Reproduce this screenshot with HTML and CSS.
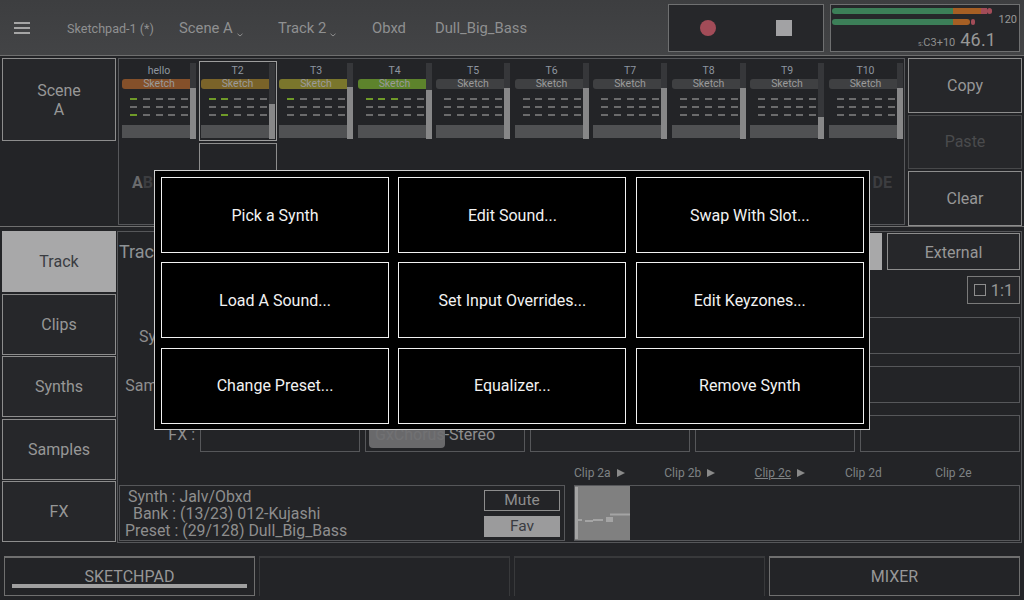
FILE: index.html
```html
<!DOCTYPE html>
<html lang="en">
<head>
<meta charset="utf-8">
<title>Sketchpad</title>
<link rel="stylesheet" href="styles.css">
</head>
<body>
<div class="app">
  <header class="header">
    <div class="burger"><i></i><i></i><i></i></div>
    <span class="h-item h-sketchpad">Sketchpad-1 (*)</span>
    <span class="h-item h-scene">Scene A<svg class="chev" width="6" height="4" viewBox="0 0 6 4"><path d="M.5 .8 3 3 5.5 .8" fill="none" stroke="#8f8f8f"/></svg></span>
    <span class="h-item h-track">Track 2<svg class="chev" width="6" height="4" viewBox="0 0 6 4"><path d="M.5 .8 3 3 5.5 .8" fill="none" stroke="#8f8f8f"/></svg></span>
    <span class="h-item h-synth">Obxd</span>
    <span class="h-item h-preset">Dull_Big_Bass</span>
    <div class="transport">
      <span class="rec"></span>
      <span class="stop"></span>
    </div>
    <div class="meter">
      <div class="m-bar m-1"><b class="g"></b><b class="o"></b><b class="r"></b><b class="dot"></b></div>
      <div class="m-bar m-2"><b class="g"></b><b class="o"></b><b class="dot"></b></div>
      <span class="bpm">120</span>
      <div class="m-info"><span class="note"><small>s:</small>C3+10</span><span class="vol">46.1</span></div>
    </div>
  </header>

  <section class="top">
    <div class="btn scene">Scene<br>A</div>
    <div class="tracks">
      <div class="track-row">
        <div class="cell"><div class="name">hello</div><div class="tag t-orange">Sketch</div>
          <div class="steps"><div><i class="on"></i><i></i><i></i><i></i><i></i></div><div><i></i><i></i><i></i><i></i><i></i></div><div><i class="on"></i><i></i><i></i><i></i><i></i></div></div>
          <div class="gbar"></div><div class="scroll"><div class="thumb" style="height:51px"></div></div></div>
        <div class="cell sel"><div class="name">T2</div><div class="tag t-gold">Sketch</div>
          <div class="steps"><div><i class="on"></i><i class="on"></i><i></i><i></i><i></i></div><div><i></i><i></i><i></i><i></i><i></i></div><div><i></i><i class="on"></i><i></i><i></i><i></i></div></div>
          <div class="gbar"></div><div class="scroll"><div class="thumb" style="height:35px"></div></div><div class="slot"></div></div>
        <div class="cell"><div class="name">T3</div><div class="tag t-olive">Sketch</div>
          <div class="steps"><div><i class="on"></i><i></i><i></i><i></i><i></i></div><div><i></i><i></i><i></i><i></i><i></i></div><div><i></i><i></i><i></i><i></i><i></i></div></div>
          <div class="gbar"></div><div class="scroll"><div class="thumb" style="height:52px"></div></div></div>
        <div class="cell"><div class="name">T4</div><div class="tag t-green">Sketch</div>
          <div class="steps"><div><i class="on"></i><i class="on"></i><i class="on"></i><i></i><i></i></div><div><i></i><i></i><i></i><i></i><i></i></div><div><i></i><i></i><i></i><i></i><i></i></div></div>
          <div class="gbar"></div><div class="scroll"><div class="thumb" style="height:49px"></div></div></div>
        <div class="cell"><div class="name">T5</div><div class="tag">Sketch</div>
          <div class="steps"><div><i></i><i></i><i></i><i></i><i></i></div><div><i></i><i></i><i></i><i></i><i></i></div><div><i></i><i></i><i></i><i></i><i></i></div></div>
          <div class="gbar"></div><div class="scroll"><div class="thumb" style="height:51px"></div></div></div>
        <div class="cell"><div class="name">T6</div><div class="tag">Sketch</div>
          <div class="steps"><div><i></i><i></i><i></i><i></i><i></i></div><div><i></i><i></i><i></i><i></i><i></i></div><div><i></i><i></i><i></i><i></i><i></i></div></div>
          <div class="gbar"></div><div class="scroll"><div class="thumb" style="height:51px"></div></div></div>
        <div class="cell"><div class="name">T7</div><div class="tag">Sketch</div>
          <div class="steps"><div><i></i><i></i><i></i><i></i><i></i></div><div><i></i><i></i><i></i><i></i><i></i></div><div><i></i><i></i><i></i><i></i><i></i></div></div>
          <div class="gbar"></div><div class="scroll"><div class="thumb" style="height:51px"></div></div></div>
        <div class="cell"><div class="name">T8</div><div class="tag">Sketch</div>
          <div class="steps"><div><i></i><i></i><i></i><i></i><i></i></div><div><i></i><i></i><i></i><i></i><i></i></div><div><i></i><i></i><i></i><i></i><i></i></div></div>
          <div class="gbar"></div><div class="scroll"><div class="thumb" style="height:51px"></div></div></div>
        <div class="cell"><div class="name">T9</div><div class="tag">Sketch</div>
          <div class="steps"><div><i></i><i></i><i></i><i></i><i></i></div><div><i></i><i></i><i></i><i></i><i></i></div><div><i></i><i></i><i></i><i></i><i></i></div></div>
          <div class="gbar"></div><div class="scroll"><div class="thumb" style="height:22px"></div></div></div>
        <div class="cell"><div class="name">T10</div><div class="tag">Sketch</div>
          <div class="steps"><div><i></i><i></i><i></i><i></i><i></i></div><div><i></i><i></i><i></i><i></i><i></i></div><div><i></i><i></i><i></i><i></i><i></i></div></div>
          <div class="gbar"></div><div class="scroll"><div class="thumb" style="height:51px"></div></div></div>
      </div>
      <div class="letters"><span class="l-a">A<em>B</em></span><span class="l-e">DE</span></div>
    </div>
    <div class="actions">
      <div class="btn act">Copy</div>
      <div class="btn act off">Paste</div>
      <div class="btn act">Clear</div>
    </div>
  </section>

  <section class="middle">
    <nav class="tabs">
      <div class="btn tab active">Track</div>
      <div class="btn tab">Clips</div>
      <div class="btn tab">Synths</div>
      <div class="btn tab">Samples</div>
      <div class="btn tab">FX</div>
    </nav>
    <div class="main">
      <div class="row-title">
        <span class="title">Track</span>
        <span class="seg"></span>
        <div class="btn external">External</div>
      </div>
      <div class="row-ratio"><div class="btn ratio"><span class="box"></span>1:1</div></div>
      <div class="row-slots"><span class="lbl">Synths :</span><div class="slotbox"></div><div class="slotbox"></div><div class="slotbox"></div><div class="slotbox"></div><div class="slotbox"></div></div>
      <div class="row-slots"><span class="lbl">Samples :</span><div class="slotbox"></div><div class="slotbox"></div><div class="slotbox"></div><div class="slotbox"></div><div class="slotbox"></div></div>
      <div class="row-slots"><span class="lbl">FX :</span><div class="slotbox"></div><div class="slotbox fx">GxChorus-Stereo<span class="fill"></span></div><div class="slotbox"></div><div class="slotbox"></div><div class="slotbox"></div></div>
      <div class="clip-labels">
        <span>Clip 2a<i class="play"></i></span>
        <span>Clip 2b<i class="play"></i></span>
        <span><u>Clip 2c</u><i class="play"></i></span>
        <span>Clip 2d</span>
        <span>Clip 2e</span>
      </div>
      <div class="row-bottom">
        <div class="info">
          <div class="info-text">
            <div><span class="k">Synth :</span> Jalv/Obxd</div>
            <div><span class="k">Bank :</span> (13/23) 012-Kujashi</div>
            <div><span class="k">Preset :</span> (29/128) Dull_Big_Bass</div>
          </div>
          <div class="info-btns">
            <div class="mini">Mute</div>
            <div class="mini fav">Fav</div>
          </div>
        </div>
        <div class="clip-view">
          <svg class="thumbnail" width="55" height="54" viewBox="0 0 55 54">
            <rect width="55" height="54" fill="#808080"/>
            <rect x="0" y="1" width="3" height="52" fill="#a4a4a4"/>
            <path d="M3 34h4M10 35h8M18 34h10M35 28.500h20" stroke="#a4a4a4" stroke-width="2" fill="none"/>
            <rect x="31" y="31" width="7" height="5" fill="#a4a4a4"/>
          </svg>
        </div>
      </div>
    </div>
  </section>

  <footer class="footer">
    <div class="fbtn on">SKETCHPAD<span class="under"></span></div>
    <div class="fbtn dim"></div>
    <div class="fbtn dim"></div>
    <div class="fbtn on">MIXER</div>
  </footer>

  <div class="popup">
    <button class="pbtn">Pick a Synth</button>
    <button class="pbtn">Edit Sound...</button>
    <button class="pbtn">Swap With Slot...</button>
    <button class="pbtn">Load A Sound...</button>
    <button class="pbtn">Set Input Overrides...</button>
    <button class="pbtn">Edit Keyzones...</button>
    <button class="pbtn">Change Preset...</button>
    <button class="pbtn">Equalizer...</button>
    <button class="pbtn">Remove Synth</button>
  </div>
</div>
</body>
</html>
```

FILE: styles.css
```css
* { box-sizing: border-box; }
html, body { margin: 0; padding: 0; }
body { background: #232427; font-family: Roboto, "Liberation Sans", sans-serif; color: #979797; }
.app { position: relative; width: 1024px; height: 600px; overflow: hidden; display: flex; flex-direction: column; background: #232427; }
.btn { border: 1px solid #8d8d8d; display: flex; align-items: center; justify-content: center; text-align: center; background: #26272a; }

/* header */
.header { position: relative; height: 56px; flex: none; display: flex; align-items: center; background: linear-gradient(#3d3e40, #434446); border-bottom: 1px solid #6f6f6f; }
.burger { width: 16px; margin-left: 14px; display: flex; flex-direction: column; gap: 3px; }
.burger i { display: block; height: 2px; background: #a5a5a5; }
.h-item { white-space: nowrap; color: #8f9091; font-size: 14.8px; padding-top: 1px; }
.h-sketchpad { font-size: 12.6px; margin-left: 37px; width: 112px; }
.h-scene { width: 99px; }
.h-track { width: 94px; }
.h-synth { width: 63px; }
.h-preset { width: 233px; }
.chev { margin-left: 4px; vertical-align: -4px; }
.transport { width: 156px; height: 48px; border: 1px solid #6f7071; background: #26272a; display: flex; align-items: center; }
.rec { width: 16px; height: 16px; border-radius: 50%; background: #a24c58; margin-left: 31px; }
.stop { width: 16px; height: 16px; background: #a2a2a4; margin-left: 60px; }
.meter { position: relative; width: 190px; height: 48px; margin-left: 6px; border: 1px solid #6f7071; background: #26272a; }
.m-bar { position: absolute; left: 1px; height: 6px; display: flex; }
.m-1 { top: 3px; }
.m-2 { top: 14px; }
.m-bar b { display: block; height: 6px; }
.m-bar .g { width: 121px; background: #3c7f58; border-radius: 3px 0 0 3px; }
.m-1 .o { width: 28px; background: #a65f24; }
.m-1 .r { width: 6px; background: #a24c58; }
.m-1 .dot { width: 5px; margin-left: 0; background: #a24c58; border-radius: 3px; }
.m-2 .o { width: 17px; background: #a65f24; border-radius: 0 3px 3px 0; }
.m-2 .dot { width: 4px; margin-left: 1px; background: #a24c58; border-radius: 2px; }
.bpm { position: absolute; right: 2px; top: 8px; font-size: 11px; color: #979797; }
.m-info { position: absolute; left: 87px; top: 24px; display: flex; align-items: baseline; gap: 5px; white-space: nowrap; }
.note { font-size: 11px; color: #8f8f8f; }
.note small { font-size: 7px; }
.vol { font-size: 18px; letter-spacing: .2px; color: #979797; }

/* top */
.top { height: 171px; flex: none; display: flex; padding: 2px 2px 0 2px; border-bottom: 1px solid #6f6f6f; }
.scene { width: 114px; height: 83px; font-size: 16px; line-height: 19px; padding-top: 1px; }
.tracks { width: 787px; height: 167px; margin-left: 2px; border: 1px solid #56575a; padding: 4px 0 0 3px; }
.track-row { display: flex; gap: 4.5px; height: 108px; }
.cell { position: relative; width: 74px; height: 76px; flex: none; }
.cell.sel { outline: 1px solid #9d9d9d; outline-offset: 1px; }
.name { height: 16px; line-height: 15px; font-size: 10.5px; text-align: center; color: #8e96a0; }
.tag { height: 10px; line-height: 10px; border-radius: 3px; font-size: 10.5px; text-align: center; color: #9a9a9a; background: #3f4042; }
.t-orange { background: #84502a; }
.t-gold { background: #7a6329; }
.t-olive { background: #7a762c; }
.t-green { background: #5d832c; }
.steps { padding: 9px 8px 0 8px; }
.steps div { display: flex; justify-content: space-between; height: 8px; }
.steps i { display: block; width: 7px; height: 2px; background: #6b6b6c; }
.steps i.on { background: #6f9a28; }
.gbar { height: 13px; margin-top: 3px; background: #505153; }
.scroll { position: absolute; top: 0; right: 0; width: 6px; height: 76px; background: #36373a; display: flex; align-items: flex-end; }
.thumb { width: 100%; background: #878788; }
.slot { position: absolute; left: -2px; right: -2px; top: 80px; height: 40px; border: 1px solid #8d8d8d; }
.letters { display: flex; justify-content: space-between; font-size: 16px; font-weight: 700; padding: 2px 12px 0 10px; height: 20px; }
.l-a { color: #6a6b6d; }
.l-a em { font-style: normal; color: #3c3d40; }
.l-e { color: #3c3d40; }
.actions { width: 114px; margin-left: 3px; display: flex; flex-direction: column; gap: 2px; }
.act { height: 54.500px; font-size: 16px; }
.off { border-color: #47484a; color: #4a4b4d; }

/* middle */
.middle { height: 316px; flex: none; display: flex; padding: 4px 2px 0 2px; }
.tabs { width: 114px; flex: none; display: flex; flex-direction: column; gap: 1.5px; }
.tab { height: 61px; font-size: 16px; }
.tab.active { background: #a8a8a9; color: #3a3c42; border-color: #a8a8a9; }
.main { flex: 1; min-width: 0; margin-left: 1px; border: 1px solid #56575a; display: flex; flex-direction: column; }
.row-title { display: flex; height: 37px; margin-top: 1px; padding: 0 1px; align-items: stretch; }
.title { font-size: 18px; line-height: 38px; width: 720px; color: #8e9295; }
.seg { width: 43px; background: #a8a8a9; }
.external { width: 133px; margin-left: 5px; font-size: 16px; padding-top: 1px; }
.row-ratio { display: flex; justify-content: flex-end; padding: 6px 1px 0 0; height: 47px; }
.ratio { width: 53px; height: 28px; font-size: 16.5px; gap: 5px; border-color: #7a7a7a; }
.box { width: 12px; height: 12px; border: 1px solid #8d8d8d; }
.row-slots { display: flex; gap: 5px; height: 37px; margin-bottom: 12px; padding-right: 1px; }
.lbl { width: 77px; font-size: 16px; text-align: right; line-height: 39px; white-space: nowrap; color: #8e8e8e; }
.slotbox { position: relative; width: 160px; border: 1px solid #56575a; font-size: 16px; padding: 9px 0 0 9px; white-space: nowrap; color: #8e8e8e; }
.fill { position: absolute; left: 3px; top: 1px; width: 76px; bottom: 3px; background: rgba(111,111,113,.93); border-radius: 0 0 4px 4px; }
.clip-labels { display: grid; grid-template-columns: repeat(4, 90.3px) 86px; padding: 1px 0 0 456px; height: 21px; font-size: 12px; line-height: 16px; color: #7e8284; }
.play { display: inline-block; margin-left: 6px; border-left: 8px solid #8a8a8a; border-top: 4px solid transparent; border-bottom: 4px solid transparent; }
.row-bottom { display: flex; gap: 9px; padding: 0 1px; height: 56px; }
.info { width: 446px; border: 1px solid #56575a; display: flex; font-size: 15.900px; line-height: 17px; color: #8e8e8e; padding-top: 2px; }
.info-text { width: 364px; white-space: nowrap; }
.info-text div:nth-child(1) { padding-left: 8px; }
.info-text div:nth-child(2) { padding-left: 13px; }
.info-text div:nth-child(3) { padding-left: 5px; }
.info-btns { display: flex; flex-direction: column; gap: 5px; padding-top: 2px; }
.mini { width: 76px; height: 21px; border: 1px solid #8d8d8d; font-size: 15.500px; text-align: center; line-height: 19px; }
.mini.fav { background: #9b9b9c; border-color: #9b9b9c; color: #3a3c42; }
.clip-view { flex: 1; border: 1px solid #56575a; }
.thumbnail { display: block; }

/* footer */
.footer { position: relative; flex: 1; display: flex; gap: 4px; padding: 13px 4px 0 4px; }
.fbtn { position: relative; width: 251px; height: 40px; font-size: 16px; text-align: center; line-height: 38px; border: 1px solid #6f6f6f; border-top-width: 2px; }
.fbtn.dim { border-color: #38393b; border-bottom: 0; }
.under { position: absolute; left: 7px; right: 7px; bottom: 7px; height: 4px; background: #a0a0a0; }

/* popup */
.popup { position: absolute; left: 154px; top: 170px; width: 716px; height: 260px; background: #000; border: 1px solid #cfcfcf; padding: 6px; display: grid; grid-template-columns: 228px 228px 228px; column-gap: 9.4px; grid-template-rows: 76px 76px 76px; row-gap: 9.4px; }
.pbtn { background: #000; color: #f2f2f2; border: 1.5px solid #f2f2f2; font: 16px Roboto, "Liberation Sans", sans-serif; padding: 0; }
```
